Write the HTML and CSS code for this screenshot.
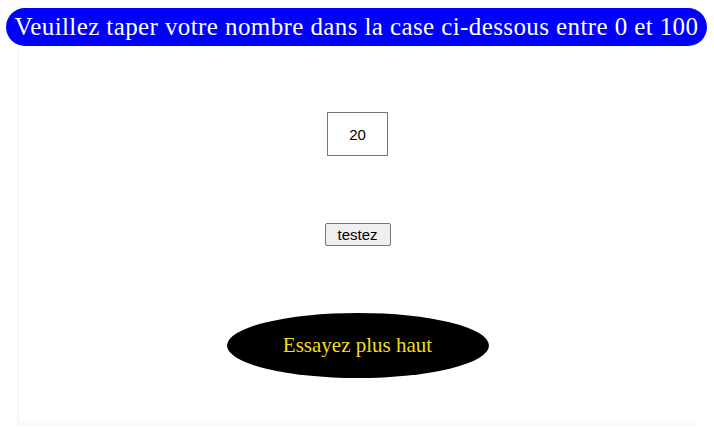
FILE: index.html
```html
<!DOCTYPE html>
<html lang="fr">
<head>
<meta charset="utf-8">
<title>Devinez le nombre</title>
<link rel="stylesheet" href="styles.css">
</head>
<body>
<h1 class="banner">Veuillez taper votre nombre dans la case ci-dessous entre 0 et 100</h1>
<main class="frame">
  <input class="guess" type="text" value="20">
  <button class="test-btn" type="button">testez</button>
  <div class="result">Essayez plus haut</div>
</main>
</body>
</html>
```
FILE: styles.css
```css
html, body {
  margin: 0;
  padding: 0;
  background: #ffffff;
}
body {
  width: 714px;
  height: 428px;
  overflow: hidden;
  font-family: "Liberation Serif", "Times New Roman", serif;
}
.banner {
  margin: 8px 7px 0 6px;
  height: 38px;
  line-height: 38px;
  border-radius: 19px;
  background: #0000ff;
  color: #ffffff;
  font-weight: normal;
  font-size: 25px;
  letter-spacing: 0.4px;
  text-align: center;
  white-space: nowrap;
}
.frame {
  box-sizing: border-box;
  margin: 4px 18px 0 17px;
  height: 376px;
  border-left: 2px solid #f7f7f7;
  border-bottom: 5px solid #f9f9f9;
  display: flex;
  flex-direction: column;
  align-items: center;
  padding-top: 62px;
}
.guess {
  box-sizing: border-box;
  width: 61px;
  height: 44px;
  border: 1px solid #767676;
  text-align: center;
  font-family: "Liberation Sans", Arial, sans-serif;
  font-size: 15px;
  color: #000;
  padding: 0;
}
.test-btn {
  margin-top: 67px;
  box-sizing: border-box;
  width: 66px;
  height: 23px;
  border: 1px solid #767676;
  border-radius: 2px;
  background: #efefef;
  font-family: "Liberation Sans", Arial, sans-serif;
  font-size: 15px;
  color: #000;
  padding: 0;
}
.result {
  margin-top: 67px;
  width: 262px;
  height: 65px;
  border-radius: 50%;
  background: #000000;
  color: #f2de1c;
  font-size: 21px;
  display: flex;
  align-items: center;
  justify-content: center;
}
```
